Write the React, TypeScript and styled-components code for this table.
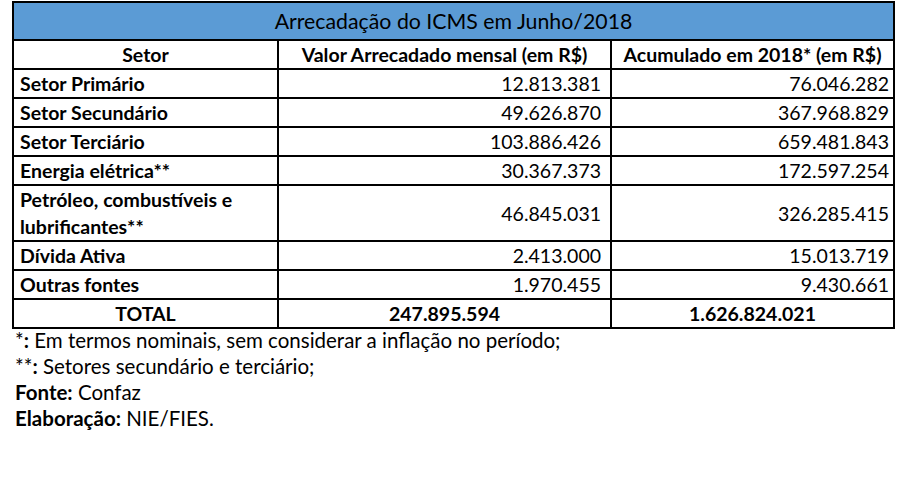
import React from 'react';
import styled, { createGlobalStyle } from 'styled-components';

const GlobalStyle = createGlobalStyle`
  html, body {
    margin: 0;
    padding: 0;
    background: #ffffff;
  }
  body {
    font-family: Lato, "Liberation Sans", sans-serif;
    color: #000000;
  }
`;

const Page = styled.div`
  width: 899px;
  height: 489px;
  padding: 1px 0 0 12px;
  box-sizing: border-box;
`;

const Table = styled.table`
  border-collapse: collapse;
  table-layout: fixed;
  width: 881px;
  font-size: 19.5px;
`;

const TitleCell = styled.td`
  background: #5b9bd5;
  border: 2px solid #000;
  height: 36px;
  padding: 0;
  text-align: center;
  font-size: 21.3px;
  font-weight: 400;
`;

const HeadCell = styled.th`
  border: 2px solid #000;
  height: 27px;
  padding: 0 2px;
  text-align: center;
  font-weight: 700;
  white-space: nowrap;
`;

const Cell = styled.td<{ $align?: 'left' | 'right' | 'center'; $bold?: boolean; $pr?: number }>`
  border: 2px solid #000;
  height: 27px;
  padding: 0 ${p => p.$pr ?? 6}px 0 6px;
  text-align: ${p => p.$align ?? 'left'};
  font-weight: ${p => (p.$bold ? 700 : 400)};
  line-height: 27px;
  vertical-align: middle;
`;

const Notes = styled.div`
  margin-top: -1px;
  padding-left: 3px;
  font-size: 20.5px;
`;

const NoteLine = styled.div`
  height: 26px;
  line-height: 25px;
  white-space: nowrap;
`;

const rows = [
  { setor: 'Setor Primário', mensal: '12.813.381', acumulado: '76.046.282' },
  { setor: 'Setor Secundário', mensal: '49.626.870', acumulado: '367.968.829' },
  { setor: 'Setor Terciário', mensal: '103.886.426', acumulado: '659.481.843' },
  { setor: 'Energia elétrica**', mensal: '30.367.373', acumulado: '172.597.254' },
  { setor: 'Petróleo, combustíveis e lubrificantes**', mensal: '46.845.031', acumulado: '326.285.415' },
  { setor: 'Dívida Ativa', mensal: '2.413.000', acumulado: '15.013.719' },
  { setor: 'Outras fontes', mensal: '1.970.455', acumulado: '9.430.661' }
];

const App: React.FC = () => (
  <Page>
    <GlobalStyle />
    <Table>
      <colgroup>
        <col style={{ width: 265 }} />
        <col style={{ width: 333 }} />
        <col style={{ width: 283 }} />
      </colgroup>
      <tbody>
        <tr>
          <TitleCell colSpan={3}>Arrecadação do ICMS em Junho/2018</TitleCell>
        </tr>
        <tr>
          <HeadCell>Setor</HeadCell>
          <HeadCell>Valor Arrecadado mensal (em R$)</HeadCell>
          <HeadCell>Acumulado em 2018* (em R$)</HeadCell>
        </tr>
        {rows.map(r => (
          <tr key={r.setor}>
            <Cell $bold>{r.setor}</Cell>
            <Cell $align="right" $pr={9}>{r.mensal}</Cell>
            <Cell $align="right" $pr={4}>{r.acumulado}</Cell>
          </tr>
        ))}
        <tr>
          <Cell $bold $align="center">TOTAL</Cell>
          <Cell $bold $align="center">247.895.594</Cell>
          <Cell $bold $align="center">1.626.824.021</Cell>
        </tr>
      </tbody>
    </Table>
    <Notes>
      <NoteLine>*<b>:</b> Em termos nominais, sem considerar a inflação no período;</NoteLine>
      <NoteLine>**<b>:</b> Setores secundário e terciário;</NoteLine>
      <NoteLine><b>Fonte:</b> Confaz</NoteLine>
      <NoteLine><b>Elaboração:</b> NIE/FIES.</NoteLine>
    </Notes>
  </Page>
);

export default App;
